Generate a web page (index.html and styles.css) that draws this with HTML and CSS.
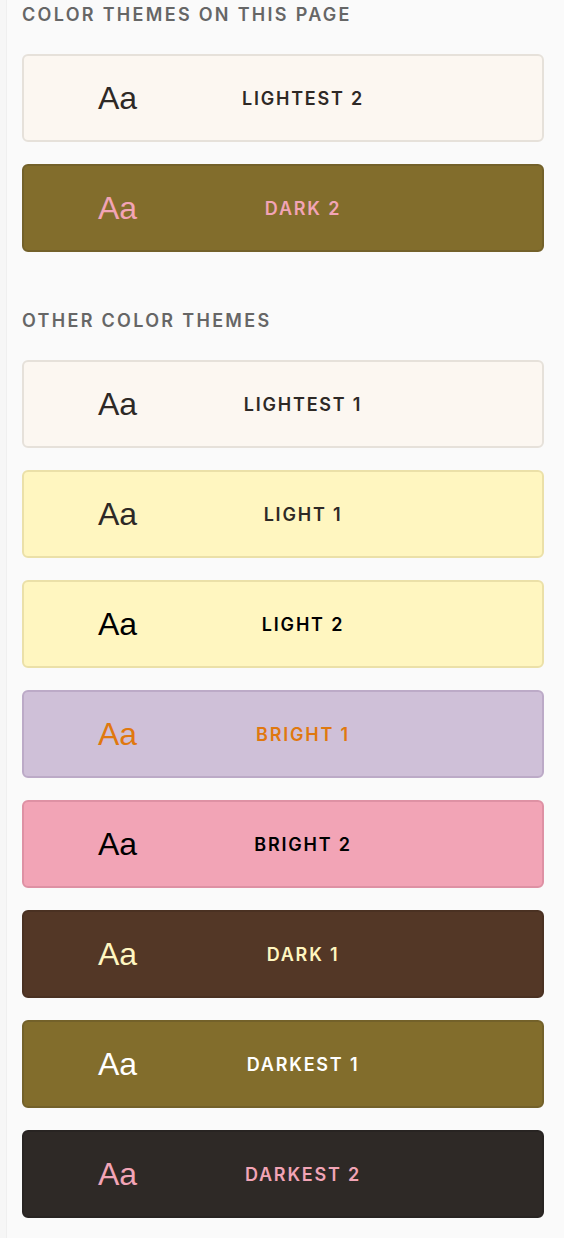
FILE: index.html
```html
<!DOCTYPE html>
<html lang="en">
<head>
<meta charset="utf-8">
<title>Color themes</title>
<link rel="stylesheet" href="styles.css">
</head>
<body>
<div class="page">
  <section class="group">
    <h2 class="group-title">Color themes on this page</h2>
    <div class="cards">
      <div class="card t-lightest2"><span class="aa">Aa</span><span class="name">Lightest 2</span></div>
      <div class="card t-dark2"><span class="aa">Aa</span><span class="name">Dark 2</span></div>
    </div>
  </section>
  <section class="group group-other">
    <h2 class="group-title">Other color themes</h2>
    <div class="cards">
      <div class="card t-lightest1"><span class="aa">Aa</span><span class="name">Lightest 1</span></div>
      <div class="card t-light1"><span class="aa">Aa</span><span class="name">Light 1</span></div>
      <div class="card t-light2"><span class="aa">Aa</span><span class="name">Light 2</span></div>
      <div class="card t-bright1"><span class="aa">Aa</span><span class="name">Bright 1</span></div>
      <div class="card t-bright2"><span class="aa">Aa</span><span class="name">Bright 2</span></div>
      <div class="card t-dark1"><span class="aa">Aa</span><span class="name">Dark 1</span></div>
      <div class="card t-darkest1"><span class="aa">Aa</span><span class="name">Darkest 1</span></div>
      <div class="card t-darkest2"><span class="aa">Aa</span><span class="name">Darkest 2</span></div>
    </div>
  </section>
</div>
</body>
</html>
```

FILE: styles.css
```css
html, body {
  margin: 0;
  padding: 0;
  background: #fafafa;
}
body {
  font-family: Inter, "Liberation Sans", sans-serif;
  border-left: 6px solid #f6f6f6;
  box-shadow: inset 1px 0 0 #efefef;
  min-height: 1238px;
}
.page {
  padding: 4px 20px 20px 16px;
}
.group-title {
  margin: 0 0 28px;
  font-size: 18px;
  line-height: 22px;
  font-weight: 600;
  letter-spacing: 2.3px;
  text-transform: uppercase;
  color: #666666;
}
.group-other {
  margin-top: 58px;
}
.cards {
  display: flex;
  flex-direction: column;
  gap: 22px;
}
.card {
  box-sizing: border-box;
  height: 88px;
  border: 2px solid;
  border-radius: 6px;
  display: flex;
  align-items: center;
  padding: 0 74px;
}
.aa {
  width: 40px;
  font-family: "Liberation Sans", Arial, sans-serif;
  font-size: 32px;
  line-height: 1;
}
.name {
  flex: 1;
  text-align: center;
  font-size: 18px;
  font-weight: 600;
  letter-spacing: 1.8px;
  text-transform: uppercase;
}
.t-lightest1, .t-lightest2 { background: #fcf7f1; border-color: #e6e1da; color: #2e2926; }
.t-dark2 { background: #826d2c; border-color: #73612a; color: #f2a4b6; }
.t-light1 { background: #fff6c0; border-color: #ebe0a8; color: #2e2926; }
.t-light2 { background: #fff6c0; border-color: #ebe0a8; color: #000000; }
.t-bright1 { background: #cfc0d8; border-color: #bcaac7; color: #e0780f; }
.t-bright2 { background: #f2a4b6; border-color: #de91a4; color: #000000; }
.t-dark1 { background: #533726; border-color: #4a3122; color: #fff6c0; }
.t-darkest1 { background: #826d2c; border-color: #73612a; color: #ffffff; }
.t-darkest2 { background: #2e2926; border-color: #282422; color: #f2a4b6; }
```
